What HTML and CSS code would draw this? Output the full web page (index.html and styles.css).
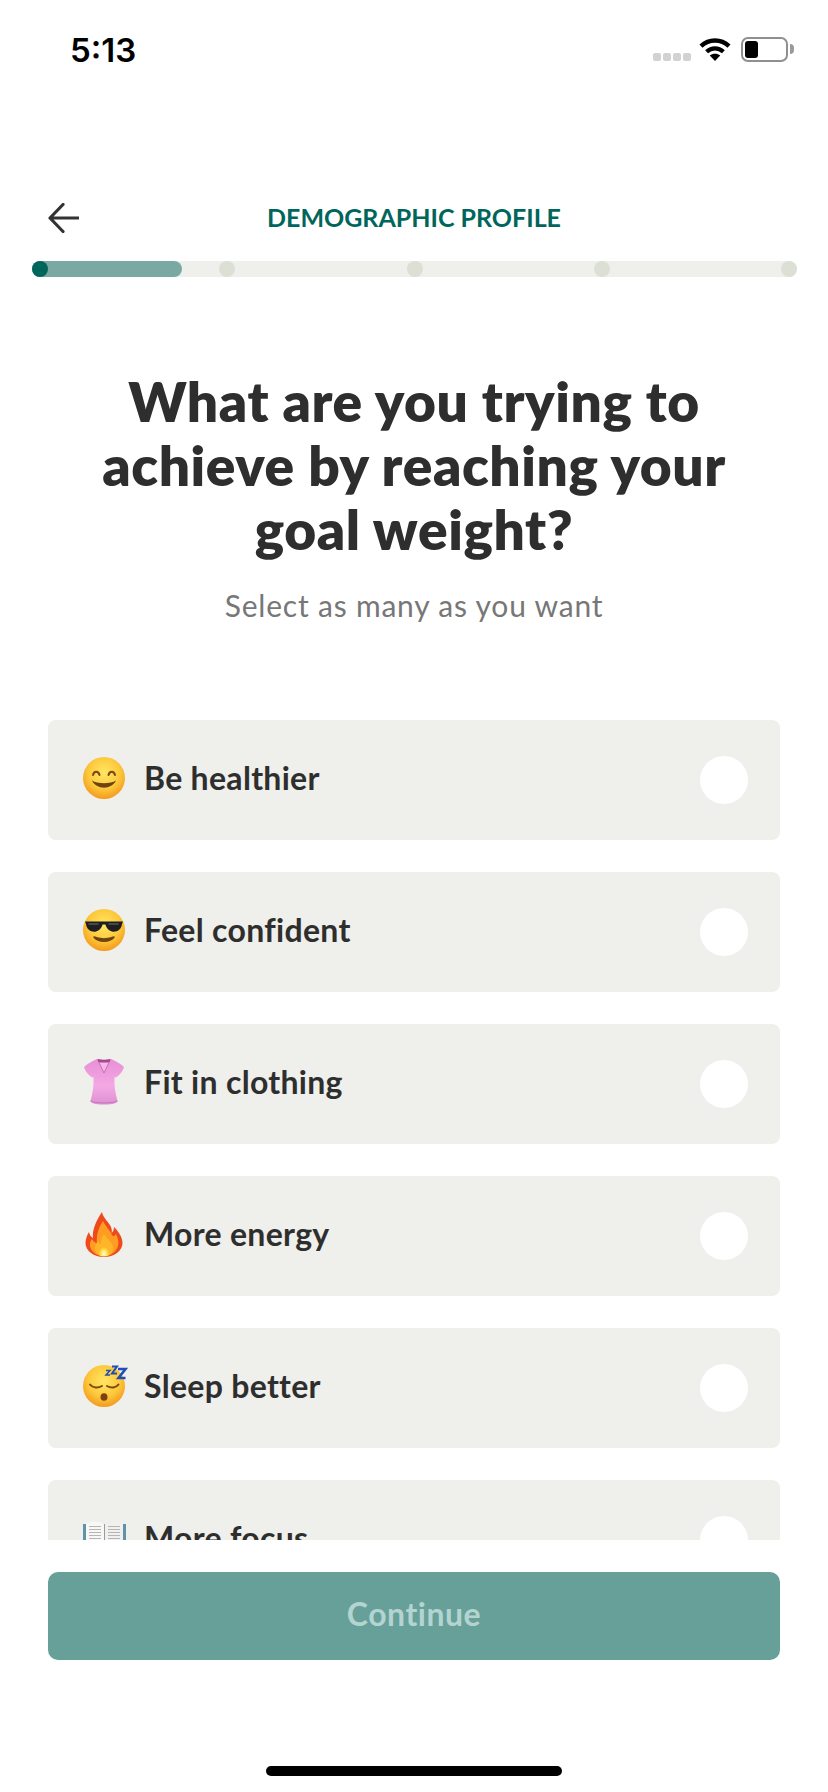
FILE: index.html
```html
<!DOCTYPE html>
<html lang="en">

<head>
    <meta charset="UTF-8">
    <meta name="viewport" content="width=device-width, initial-scale=1.0">
    <title>Demographic profile</title>
    <link rel="stylesheet" href="styles.css">
</head>

<body>
    <div class="page">
        <div class="status-bar">
            <span class="time">5:13</span>
            <div class="status-icons">
                <div class="signal"><i></i><i></i><i></i><i></i></div>
                <svg class="wifi" width="32" height="24" viewBox="0 0 32 24">
                    <path d="M2 9.2C10 1.6 22 1.6 30 9.2" fill="none" stroke="#000" stroke-width="4.4" />
                    <path d="M7.6 14.8C12.6 10.2 19.4 10.2 24.4 14.8" fill="none" stroke="#000" stroke-width="4.2" />
                    <path d="M16 24L10.8 18.6C13.6 16.2 18.4 16.2 21.2 18.6Z" fill="#000" />
                </svg>
                <div class="battery"><div class="battery-level"></div></div>
            </div>
        </div>

        <header class="nav">
            <svg class="back" width="31" height="30" viewBox="0 0 31 30">
                <path d="M15 1.500L2 15L15 28.500M2 15H30.500" fill="none" stroke="#333" stroke-width="3.200" stroke-linecap="round" stroke-linejoin="round" />
            </svg>
            <div class="nav-title">DEMOGRAPHIC PROFILE</div>
        </header>

        <div class="progress">
            <div class="progress-fill"></div>
            <div class="progress-dots">
                <i class="dot dot-active"></i><i class="dot"></i><i class="dot"></i><i class="dot"></i><i class="dot"></i>
            </div>
        </div>

        <h1 class="question">What are you trying to achieve by reaching your goal weight?</h1>
        <p class="hint">Select as many as you want</p>

        <div class="choices">
            <div class="choice">
                <div class="choice-label">
                    <svg class="emoji" viewBox="0 -2 42 46">
                        <defs>
                            <radialGradient id="face" cx="50%" cy="38%" r="62%">
                                <stop offset="0" stop-color="#ffe664" />
                                <stop offset="0.6" stop-color="#fdc93c" />
                                <stop offset="1" stop-color="#f39a1c" />
                            </radialGradient>
                        </defs>
                        <circle cx="21" cy="21" r="21" fill="url(#face)" />
                        <path d="M10 18C11 13.500 15.500 13.500 16.500 18M25.500 18C26.500 13.500 31 13.500 32 18" fill="none" stroke="#7a4a12" stroke-width="2" stroke-linecap="round" />
                        <path d="M9 23.500C13 33 29 33 33 23.500C28 27 14 27 9 23.500Z" fill="#6e4311" />
                    </svg>
                    <span>Be healthier</span>
                </div>
                <div class="radio"></div>
            </div>

            <div class="choice">
                <div class="choice-label">
                    <svg class="emoji" viewBox="0 -2 42 46">
                        <circle cx="21" cy="21" r="21" fill="url(#face)" />
                        <path d="M2 12.500H40L39 15C38.500 21 33 23.500 29 22.500C25 21.500 23 18 22.500 15.500H19.500C19 18 17 21.500 13 22.500C9 23.500 3.500 21 3 15Z" fill="#1f1f22" />
                        <path d="M6 15H15M26 15H35" stroke="#55565c" stroke-width="1.500" stroke-linecap="round" />
                        <path d="M11 28C15 33.500 27 33.500 31 28C26 30.500 16 30.500 11 28Z" fill="#6e4311" stroke="#6e4311" stroke-width="1.500" stroke-linejoin="round" />
                    </svg>
                    <span>Feel confident</span>
                </div>
                <div class="radio"></div>
            </div>

            <div class="choice">
                <div class="choice-label">
                    <svg class="emoji" viewBox="0 -2 42 46">
                        <defs>
                            <linearGradient id="shirt" x1="0" y1="0" x2="0" y2="1">
                                <stop offset="0" stop-color="#e88fd6" />
                                <stop offset="0.6" stop-color="#f3a8e4" />
                                <stop offset="1" stop-color="#de90d2" />
                            </linearGradient>
                        </defs>
                        <path d="M14 -2C18 -1 24 -1 28 -2C33 0 38 3 41 6C40 10 37 14 33 16.500L31.500 16C31 24 32.500 33 34.500 40C34 42 31 43.500 21 43.500C11 43.500 8 42 7.500 40C9.500 33 11 24 10.500 16L9 16.500C5 14 2 10 1 6C4 3 9 0 14 -2Z" fill="url(#shirt)" />
                        <path d="M14.500 -2C18 -1 24 -1 27.500 -2L26.500 1.500C24 2.300 18 2.300 15.500 1.500Z" fill="#a2488f" />
                        <path d="M16 1.500L21 12L26 1.500" fill="#f7b6ea" stroke="#c96fb6" stroke-width="1" />
                        <path d="M7.500 40C12 42.500 30 42.500 34.500 40" fill="none" stroke="#c878b8" stroke-width="1" />
                    </svg>
                    <span>Fit in clothing</span>
                </div>
                <div class="radio"></div>
            </div>

            <div class="choice">
                <div class="choice-label">
                    <svg class="emoji" viewBox="0 -2 42 46">
                        <defs>
                            <radialGradient id="flame-core" cx="50%" cy="88%" r="30%">
                                <stop offset="0" stop-color="#fffde0" />
                                <stop offset="0.6" stop-color="#ffe24a" />
                                <stop offset="1" stop-color="#ffb52a" />
                            </radialGradient>
                        </defs>
                        <path d="M19 -1C20 5 26 9 28 14C29 17 29 19 28.500 20C30 19 31 17 31 14C35 18 39.500 24 39.500 30C39.500 38 31 44 21 44C11 44 2.500 38 2.500 30C2.500 26 4 22 6 19C6.500 22 8 24 10 25C9 17 13 8 19 -1Z" fill="#ef4a1c" />
                        <path d="M20 8C22 13 27 17 29 22C30 24 32 23 33 21C35 25 36 29 35 33C33 39 28 43 21 43C14 43 8 39 7 33C6.500 30 8 27 9 26C10 28 12 30 14 30C13 22 16 14 20 8Z" fill="#ff9d23" />
                        <path d="M21 21C23 26 30 29 30 35C30 40 26 43.500 21 43.500C16 43.500 12 40 12 35C12 32 14 30 15 28C16 30 17 31 18 31C18 27 19 24 21 21Z" fill="url(#flame-core)" />
                    </svg>
                    <span>More energy</span>
                </div>
                <div class="radio"></div>
            </div>

            <div class="choice">
                <div class="choice-label">
                    <svg class="emoji" viewBox="0 -2 42 46">
                        <circle cx="21" cy="21" r="21" fill="url(#face)" />
                        <path d="M7 19.500C9.500 23 15 23.500 19 21M24 21C28 23.500 33 23 35.500 19.500" fill="none" stroke="#7a4a12" stroke-width="2" stroke-linecap="round" />
                        <ellipse cx="21" cy="32" rx="3.500" ry="3.800" fill="#7a4210" />
                        <path d="M23 5.500H27L23 10H27" fill="none" stroke="#1f4fb5" stroke-width="1.500" />
                        <path d="M29 1.500H34L29 8.500H34" fill="none" stroke="#1f4fb5" stroke-width="2" />
                        <path d="M35 4H42.500L35.500 13H42.500" fill="none" stroke="#1f4fb5" stroke-width="2.600" />
                    </svg>
                    <span>Sleep better</span>
                </div>
                <div class="radio"></div>
            </div>

            <div class="choice">
                <div class="choice-label">
                    <svg class="emoji" viewBox="0 -2 42 46">
                        <path d="M0 7H4V42H0ZM39 7H43V42H39Z" fill="#5f93a8" />
                        <path d="M3 7C9 3.500 16 4 21 7V42H3Z" fill="#f7f7f5" />
                        <path d="M40 7C34 3.500 27 4 22 7V42H40Z" fill="#f0f0ee" />
                        <path d="M6 9.500H18M6 12.500H18M6 15.500H18M6 18.500H18M6 21.500H18M25 9.500H37M25 12.500H37M25 15.500H37M25 18.500H37M25 21.500H37" stroke="#aeaeae" stroke-width="0.900" />
                        <path d="M21.500 7V42" stroke="#9a9a9a" stroke-width="1" />
                    </svg>
                    <span>More focus</span>
                </div>
                <div class="radio"></div>
            </div>
        </div>

        <button class="continue" type="button">Continue</button>
        <div class="home-bar"></div>
    </div>
</body>

</html>
```

FILE: styles.css
```css
* {
    box-sizing: border-box;
}

body {
    margin: 0;
    background-color: #ffffff;
    font-family: "Lato", "Open Sans", sans-serif;
}

.page {
    width: 828px;
    height: 1792px;
    display: flex;
    flex-direction: column;
    overflow: hidden;
}

/* status bar */
.status-bar {
    height: 100px;
    padding: 37px 40px 0 70px;
    display: flex;
    justify-content: space-between;
    align-items: flex-start;
}

.time {
    margin-top: 1px;
    font-family: "Inter", sans-serif;
    font-size: 33px;
    font-weight: 600;
    line-height: 24px;
    color: #000000;
}

.status-icons {
    display: flex;
    align-items: flex-start;
}

.signal {
    display: flex;
    gap: 2px;
    margin-top: 16px;
    margin-right: 8px;
}

.signal i {
    width: 8px;
    height: 8px;
    border-radius: 2px;
    background-color: #d2d2d2;
}

.battery {
    position: relative;
    width: 47px;
    height: 25px;
    margin-left: 10px;
    padding: 2px;
    border: 2px solid #8f8f8f;
    border-radius: 7px;
}

.battery::after {
    content: "";
    position: absolute;
    right: -8px;
    top: 5px;
    width: 4px;
    height: 10px;
    border-radius: 0 4px 4px 0;
    background-color: #9a9a9a;
}

.battery-level {
    width: 13px;
    height: 17px;
    border-radius: 3px;
    background-color: #000000;
}

/* header */
.nav {
    height: 60px;
    margin-top: 88px;
    padding: 0 48px;
    display: grid;
    grid-template-columns: 31px 1fr 31px;
    align-items: center;
}

.nav-title {
    padding-bottom: 3px;
    font-size: 25px;
    font-weight: 700;
    text-align: center;
    color: #00665c;
}

.progress {
    position: relative;
    height: 16px;
    margin: 13px 31px 0 32px;
    border-radius: 8px;
    background-color: #efefeb;
}

.progress-fill {
    position: absolute;
    left: 0;
    top: 0;
    bottom: 0;
    width: 150px;
    border-radius: 8px;
    background-color: #7aa8a3;
}

.progress-dots {
    position: relative;
    display: flex;
    justify-content: space-between;
}

.dot {
    width: 16px;
    height: 16px;
    border-radius: 50%;
    background-color: #dcdfd4;
}

.dot-active {
    background-color: #00665c;
}

/* question */
.question {
    margin: 92px 0 0;
    padding: 0 90px;
    font-size: 55px;
    font-weight: 800;
    line-height: 64px;
    letter-spacing: 0.6px;
    text-align: center;
    color: #2e2e2e;
}

.hint {
    margin: 22px 0 0;
    font-size: 30px;
    line-height: 44px;
    letter-spacing: 0.8px;
    text-align: center;
    color: #777777;
}

/* choices */
.choices {
    height: 820px;
    margin-top: 93px;
    padding: 0 48px;
    display: flex;
    flex-direction: column;
    gap: 32px;
    overflow: hidden;
}

.choice {
    flex: none;
    height: 120px;
    padding: 0 32px 0 35px;
    display: flex;
    justify-content: space-between;
    align-items: center;
    border-radius: 8px;
    background-color: #efefeb;
}

.choice-label {
    display: flex;
    align-items: center;
    gap: 19px;
    margin-bottom: 4px;
    font-size: 32px;
    font-weight: 700;
    letter-spacing: 0.3px;
    color: #2e2e2e;
}

.choice-label span {
    padding-bottom: 2px;
}

.emoji {
    width: 42px;
    height: 46px;
    overflow: visible;
}

.radio {
    width: 48px;
    height: 48px;
    border-radius: 50%;
    background-color: #ffffff;
}

/* footer */
.continue {
    flex: none;
    height: 88px;
    margin: 32px 48px 0;
    padding: 0 0 6px;
    border: none;
    border-radius: 10px;
    background-color: #679f99;
    color: #b3d4d0;
    font-family: inherit;
    font-size: 32px;
    font-weight: 700;
    letter-spacing: 0.5px;
}

.home-bar {
    flex: none;
    width: 296px;
    height: 10px;
    margin: 106px auto 0;
    border-radius: 5px;
    background-color: #000000;
}
```
